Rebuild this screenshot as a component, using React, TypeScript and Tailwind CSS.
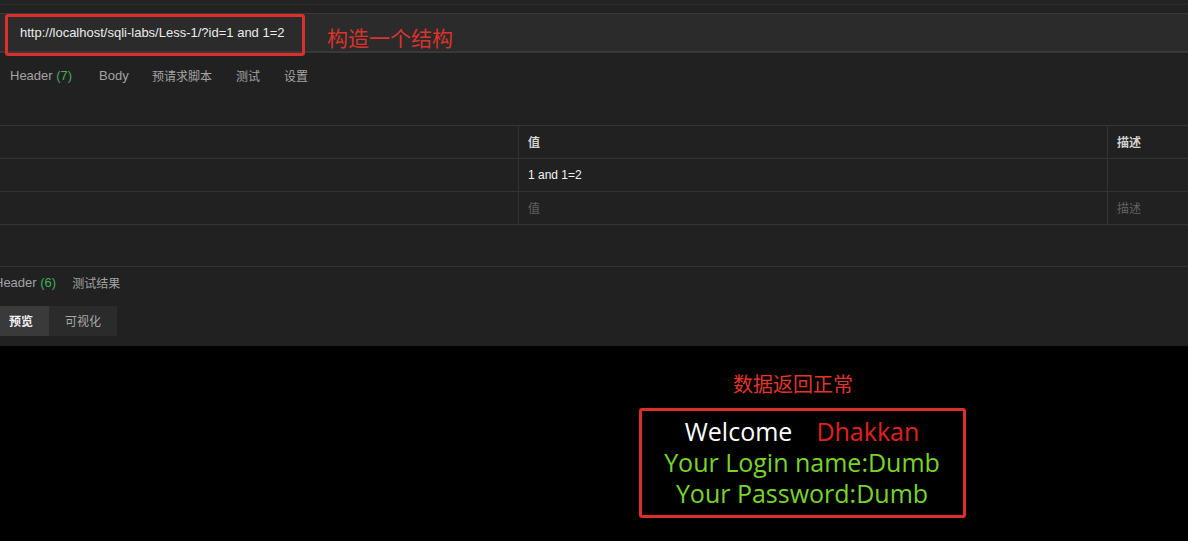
import React from "react";

const ui = { fontFamily: '"Liberation Sans", Arial, "Noto Sans CJK SC", sans-serif' };
const cjk = { fontFamily: '"Noto Sans CJK SC", "Liberation Sans", sans-serif' };
const body = { fontFamily: '"Open Sans", "Noto Sans", "Noto Sans CJK SC", sans-serif' };

export default function App() {
  return (
    <div className="w-[1188px] h-[541px] bg-black overflow-hidden flex flex-col" style={ui}>
      {/* Upper app area */}
      <div className="h-[346px] bg-[#212121] flex flex-col shrink-0">
        <div className="h-[4px] bg-[#232323]" />
        <div className="h-[9px] border-t border-[#2f2f2f] bg-[#222222]" />
        {/* URL bar */}
        <div className="relative h-[40px] border-t border-[#3a3a3a] border-b-2 border-b-[#383838] bg-[#2b2b2b] flex items-center">
          <span className="ml-[20px] text-[13px] text-[#ececec]">
            http://localhost/sqli-labs/Less-1/?id=1 and 1=2
          </span>
          <div className="absolute left-[5px] top-[0px] w-[300px] h-[42px] border-[3px] border-[#dd2f2a] rounded-[3px]" />
          <span className="absolute left-[327px] top-[9px] text-[21px] leading-[28px] text-[#d9332b]" style={cjk}>
            构造一个结构
          </span>
        </div>
        {/* Tabs */}
        <div className="h-[46px] flex items-center pl-[10px] text-[12px] text-[#a3a3a3] pb-[1px]">
          <span className="w-[65px] text-[13px]">
            Header <span className="text-[#3fae5a]">(7)</span>
          </span>
          <span className="ml-[24px] w-[29px] text-[13px]">Body</span>
          <span className="ml-[24px]" style={cjk}>预请求脚本</span>
          <span className="ml-[24px]" style={cjk}>测试</span>
          <span className="ml-[24px]" style={cjk}>设置</span>
        </div>
        <div className="h-[26px]" />
        {/* Table */}
        <div className="border-t border-[#353535] text-[12px]">
          <div className="h-[33px] flex border-b border-[#333333]">
            <div className="w-[519px] border-r border-[#333333]" />
            <div className="w-[589px] border-r border-[#333333] flex items-center pl-[9px] text-[#d2d2d2] font-bold" style={cjk}>值</div>
            <div className="flex-1 flex items-center pl-[9px] text-[#d2d2d2] font-bold" style={cjk}>描述</div>
          </div>
          <div className="h-[33px] flex border-b border-[#333333]">
            <div className="w-[519px] border-r border-[#333333]" />
            <div className="w-[589px] border-r border-[#333333] flex items-center pl-[9px] text-[#f2f2f2]">1 and 1=2</div>
            <div className="flex-1" />
          </div>
          <div className="h-[33px] flex border-b border-[#353535]">
            <div className="w-[519px] border-r border-[#333333]" />
            <div className="w-[589px] border-r border-[#333333] flex items-center pl-[9px] text-[#626262]" style={cjk}>值</div>
            <div className="flex-1 flex items-center pl-[9px] text-[#626262]" style={cjk}>描述</div>
          </div>
        </div>
        <div className="h-[41px]" />
        {/* Response tabs */}
        <div className="border-t border-[#333333] h-[32px] flex items-center text-[12px] text-[#a3a3a3]">
          <span className="ml-[-6px] text-[13px]">
            Header <span className="text-[#3fae5a]">(6)</span>
          </span>
          <span className="ml-[16px]" style={cjk}>测试结果</span>
        </div>
        <div className="h-[8px]" />
        <div className="flex text-[12px]" style={cjk}>
          <div className="w-[49px] h-[30px] bg-[#3a3a3a] flex items-center pl-[9px] text-[#f0f0f0] font-bold">预览</div>
          <div className="w-[68px] h-[30px] bg-[#2b2b2b] flex items-center justify-center text-[#a8a8a8]">可视化</div>
        </div>
      </div>
      {/* Black result area */}
      <div className="flex-1 flex flex-col items-center">
        <div className="ml-[398px] mt-[26px] text-[20px] leading-[24px] text-[#e0342c]" style={cjk}>
          数据返回正常
        </div>
        <div
          className="ml-[416px] mt-[12px] w-[327px] h-[110px] border-[3px] border-[#dd2f2a] rounded-[3px] flex flex-col items-center pt-[5px] text-[25px] leading-[31px]"
          style={body}
        >
          <div>
            <span className="text-white">Welcome</span>
            <span className="ml-[24px] text-[#e0201d]">Dhakkan</span>
          </div>
          <div className="text-[#78d42b]">Your Login name:Dumb</div>
          <div className="text-[#78d42b]">Your Password:Dumb</div>
        </div>
      </div>
    </div>
  );
}
